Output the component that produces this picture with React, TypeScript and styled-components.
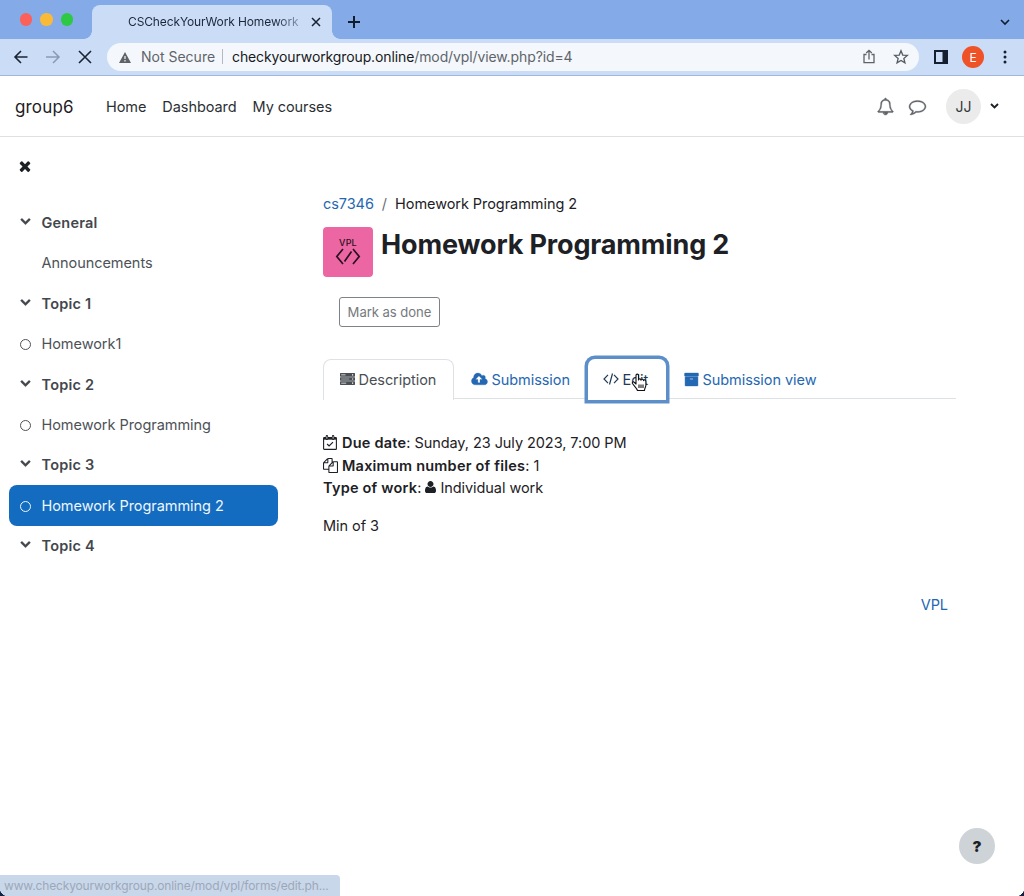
import React from "react";
import styled, { createGlobalStyle, css } from "styled-components";

const Global = createGlobalStyle`
  * { box-sizing: border-box; }
  body { margin: 0; background: #fff; font-family: Inter, "Liberation Sans", sans-serif; color: #1d2125; }
`;

/* ---------- icons ---------- */

const Svg = styled.svg<{ $dy?: number }>`
  display: block;
  flex: none;
  margin-top: ${(p) => p.$dy ?? 0}px;
`;

const glyphs = {
  chevron:
    "M1683 808l-742 741q-19 19-45 19t-45-19l-742-741q-19-19-19-45.5t19-45.5l166-165q19-19 45-19t45 19l531 531 531-531q19-19 45-19t45 19l166 165q19 19 19 45.5t-19 45.5z",
  times:
    "M1490 1322q0 40-28 68l-136 136q-28 28-68 28t-68-28l-294-294-294 294q-28 28-68 28t-68-28l-136-136q-28-28-28-68t28-68l294-294-294-294q-28-28-28-68t28-68l136-136q28-28 68-28t68 28l294 294 294-294q28-28 68-28t68 28l136 136q28 28 28 68t-28 68l-294 294 294 294q28 28 28 68z",
  archive:
    "M1088 832q0-26-19-45t-45-19h-256q-26 0-45 19t-19 45 19 45 45 19h256q26 0 45-19t19-45zm576-192v960q0 26-19 45t-45 19h-1408q-26 0-45-19t-19-45v-960q0-26 19-45t45-19h1408q26 0 45 19t19 45zm64-448v256q0 26-19 45t-45 19h-1536q-26 0-45-19t-19-45v-256q0-26 19-45t45-19h1536q26 0 45 19t19 45z",
  cloud:
    "M1216 864q0-14-9-23l-352-352q-9-9-23-9t-23 9l-351 351q-10 12-10 24 0 14 9 23t23 9h224v352q0 13 9.5 22.5t22.5 9.5h192q13 0 22.5-9.5t9.5-22.5v-352h224q13 0 22.5-9.5t9.5-22.5zm640 288q0 159-112.5 271.5t-271.5 112.5h-1088q-185 0-316.5-131.5t-131.5-316.5q0-130 70-240t188-165q-2-30-2-43 0-212 150-362t362-150q156 0 285.5 87t188.5 231q71-62 166-62 106 0 181 75t75 181q0 76-41 138 130 31 213.5 135.5t83.500 238.5z",
  user:
    "M1600 1405q0 120-73 189.5t-194 69.5h-874q-121 0-194-69.5t-73-189.5q0-53 3.5-103.5t14-109 26.5-108.5 43-97.5 62-81 85.5-53.5 111.5-20q9 0 42 21.5t74.5 48 108 48 133.5 21.5 133.5-21.5 108-48 74.5-48 42-21.5q61 0 111.5 20t85.5 53.5 62 81 43 97.5 26.5 108.5 14 109 3.5 103.5zm-320-893q0 159-112.5 271.5t-271.5 112.5-271.5-112.5-112.5-271.5 112.5-271.5 271.5-112.5 271.5 112.5 112.5 271.5z",
  files:
    "M1696 384q40 0 68 28t28 68v1216q0 40-28 68t-68 28h-960q-40 0-68-28t-28-68v-288h-544q-40 0-68-28t-28-68v-672q0-40 20-88t48-76l408-408q28-28 76-48t88-20h416q40 0 68 28t28 68v328q68-40 128-40h416zm-544 213l-299 299h299v-299zm-640-384l-299 299h299v-299zm196 647l316-316v-416h-384v416q0 40-28 68t-68 28h-416v640h512v-256q0-40 20-88t48-76zm956 804v-1152h-384v416q0 40-28 68t-68 28h-416v640h896z",
  comment:
    "M896 384q-204 0-381.5 69.5t-282 187.5-104.5 255q0 112 71.5 213.5t201.5 175.5l87 50-27 96q-24 91-70 172 152-63 275-171l43-38 57 6q69 8 130 8 204 0 381.5-69.5t282-187.5 104.5-255-104.5-255-282-187.5-381.5-69.5zm896 512q0 174-120 321.5t-326 233-450 85.5q-70 0-145-8-198 175-460 242-49 14-114 22h-5q-15 0-27-10.5t-16-27.5v-1q-3-4-.5-12t2-10 4.5-9.5l6-9 7-8.5 8-9q7-8 31-34.5t34.5-38 31-39.5 32.5-51 27-59 26-76q-157-89-247.5-220t-90.5-281q0-174 120-321.5t326-233 450-85.5 450 85.5 326 233 120 321.5z",
  bell:
    "M912 1696q0-16-16-16-59 0-101.5-42.5t-42.5-101.5q0-16-16-16t-16 16q0 73 51.5 124.5t124.5 51.5q16 0 16-16zm-666-288h1300q-266-300-266-832 0-51-24-105t-69-103-121.5-80.5-169.5-31.5-169.5 31.5-121.5 80.5-69 103-24 105q0 532-266 832zm1482 0q0 52-38 90t-90 38h-448q0 106-75 181t-181 75-181-75-75-181h-448q-52 0-90-38t-38-90q50-42 91-88t85-119.5 74.5-158.5 50-206 19.5-260q0-152 117-282.5t307-158.5q-8-19-8-39 0-40 28-68t68-28 68 28 28 68q0 20-8 39 190 28 307 158.5t117 282.5q0 139 19.5 260t50 206 74.5 158.5 85 119.5 91 88z",
};

const Glyph = ({ name, size, box = "0 0 1792 1792", width, dy, weight = 0 }: {
  name: keyof typeof glyphs; size: number; box?: string; width?: number; dy?: number; weight?: number;
}) => (
  <Svg width={width ?? size} height={size} viewBox={box} fill="currentColor" stroke="currentColor" strokeWidth={weight} overflow="visible" $dy={dy}>
    <path d={glyphs[name]} />
  </Svg>
);

const ServerIcon = () => (
  <Svg width="15" height="12" viewBox="0 0 15 13" preserveAspectRatio="none" fill="currentColor" $dy={-1}>
    <path fillRule="evenodd" d="M.5 0h14l.5.5v3l-.5.5H.5L0 3.500v-3zM1.200 1.600v.8h4.300v-.8zM12 1.400v1.200h1.200V1.400z" />
    <path fillRule="evenodd" d="M.5 4.500h14l.5.5v3l-.5.5H.5L0 8V5zM1.200 6.100v.8h8v-.8zM12 5.900v1.200h1.200V5.900z" />
    <path fillRule="evenodd" d="M.5 9h14l.5.5v3l-.5.5H.5L0 12.500v-3zM1.200 10.600v.8h5v-.8zM12 10.400v1.200h1.200v-1.200z" />
  </Svg>
);

const CalendarIcon = () => (
  <Svg width="15" height="15" viewBox="0 0 15 15" fill="none" stroke="currentColor">
    <rect x=".6" y="2.600" width="12.800" height="11.800" rx=".7" strokeWidth="1.100" />
    <path d="M.6 3.700h12.800" strokeWidth="1.900" />
    <path d="M3.900 1.200v2.600M10.100 1.200v2.600" strokeWidth="2.400" strokeLinecap="round" />
    <path d="M3.900 1.300v2.400M10.100 1.300v2.400" stroke="#fff" strokeWidth=".8" />
    <path d="M4.100 9l2 2 3.900-3.900" strokeWidth="1.200" />
  </Svg>
);

const CodeIcon = () => (
  <Svg width="16" height="12" viewBox="0 0 16 12" fill="none" stroke="currentColor" strokeWidth="1.200">
    <path d="M5 1.800L1 6l4 4.200M11 1.800L15 6l-4 4.200M9.500.5l-3 11" />
  </Svg>
);

/* ---------- browser chrome ---------- */

const Window = styled.div`
  position: relative;
  width: 1024px;
  height: 896px;
  display: flex;
  flex-direction: column;
  overflow: hidden;
`;

const TabStrip = styled.div`
  height: 39px;
  flex: none;
  display: flex;
  align-items: flex-end;
  background: #84abe7;
  padding-right: 13px;
`;

const Lights = styled.div`
  display: flex;
  gap: 8px;
  width: 92px;
  padding: 0 0 13.500px 19.500px;
`;

const Light = styled.i<{ $c: string }>`
  width: 12.500px;
  height: 12.500px;
  border-radius: 50%;
  background: ${(p) => p.$c};
`;

const BrowserTab = styled.div`
  position: relative;
  width: 240px;
  height: 34px;
  border-radius: 8px 8px 0 0;
  background: #cbdcf6;
  display: flex;
  align-items: center;
  padding: 0 10px 1px 36px;
  font-size: 12px;
  &::before, &::after {
    content: "";
    position: absolute;
    bottom: 0;
    width: 8px;
    height: 8px;
  }
  &::before { left: -8px; background: radial-gradient(circle at 0 0, transparent 7.500px, #cbdcf6 8px); }
  &::after { right: -8px; background: radial-gradient(circle at 100% 0, transparent 7.500px, #cbdcf6 8px); }
`;

const TabTitle = styled.span`
  width: 171px;
  white-space: nowrap;
  letter-spacing: -0.12px;
  background: linear-gradient(90deg, #1b2638 86%, #8a9bb8 100%);
  background-clip: text;
  color: transparent;
  margin-right: 11px;
`;

const NewTab = styled.div`
  flex: 1;
  display: flex;
  justify-content: space-between;
  padding: 0 1px 11px 16px;
  align-items: center;
`;

const Toolbar = styled.div`
  height: 37px;
  flex: none;
  display: flex;
  align-items: center;
  background: #cbdcf6;
  border-bottom: 1px solid #9fb6dd;
  padding: 0 15px 0 13px;
`;

const NavIcons = styled.div`
  display: flex;
  gap: 16px;
  width: 94px;
`;

const Address = styled.div`
  width: 812px;
  height: 28px;
  margin-right: 15px;
  border-radius: 14px;
  background: #f4f8fd;
  display: flex;
  align-items: center;
  padding: 0 10px 1px 12px;
  font-size: 14px;
  color: #606468;
`;

const Security = styled.span`
  width: 74px;
  margin-left: 10px;
  white-space: nowrap;
`;

const Divider = styled.i`
  width: 1px;
  height: 15px;
  margin: 0 9px 0 7px;
  background: #b5bac2;
`;

const Url = styled.span`
  flex: 1;
  letter-spacing: -0.11px;
  b { font-weight: 400; color: #17191c; }
`;

const AddressActions = styled.span`
  display: flex;
  gap: 16px;
`;

const Profile = styled.span`
  width: 22px;
  height: 22px;
  margin: 0 19px 0 14px;
  border-radius: 50%;
  background: #ee5226;
  color: #fff;
  font-size: 12px;
  display: grid;
  place-items: center;
`;

/* ---------- site header ---------- */

const SiteHeader = styled.header`
  height: 61px;
  flex: none;
  display: flex;
  align-items: center;
  border-bottom: 1px solid #dee0e2;
  padding: 0 25px 0 15px;
`;

const Brand = styled.span`
  width: 91px;
  font-size: 17px;
  letter-spacing: 0.15px;
  padding-top: 1px;
`;

const SiteNav = styled.nav`
  flex: 1;
  display: flex;
  gap: 16px;
  font-size: 14.500px;
  letter-spacing: -0.07px;
  color: #2b2f33;
`;

const UserTools = styled.div`
  display: flex;
  align-items: center;
  gap: 15px;
  color: #5f6368;
`;

const Initials = styled.span`
  width: 35px;
  height: 35px;
  margin: 0 -6px 0 5px;
  border-radius: 50%;
  background: #ebebec;
  color: #33383d;
  font-size: 14px;
  display: grid;
  place-items: center;
`;

const Dark = styled.span`
  color: #1d2125;
`;

/* ---------- page ---------- */

const Body = styled.div`
  flex: 1;
  display: flex;
`;

const Sidebar = styled.aside`
  width: 286px;
  padding: 21px 9px 0;
`;

const CloseButton = styled.div`
  padding-left: 8px;
  height: 44.400px;
`;

const IndexRow = styled.div<{ $section?: boolean; $active?: boolean }>`
  height: 40.400px;
  width: 268.500px;
  display: flex;
  align-items: center;
  padding-left: 10.500px;
  font-size: 14.500px;
  letter-spacing: -0.05px;
  border-radius: 8px;
  color: #4d5257;
  ${(p) => p.$section && css`font-weight: 600; color: #43474c; letter-spacing: 0.2px;`}
  ${(p) => p.$active && css`background: #136cc0; color: #eef6fd;`}
`;

const Marker = styled.span`
  width: 22px;
`;

const Ring = styled.i`
  display: block;
  width: 11px;
  height: 11px;
  margin-top: 2px;
  border: 1px solid currentColor;
  border-radius: 50%;
`;

const Main = styled.main`
  width: 633px;
  margin-left: 37px;
  padding-top: 55.500px;
  font-size: 14.500px;
  letter-spacing: -0.06px;
  display: flex;
  flex-direction: column;
`;

const Link = styled.a`
  color: #2467b2;
`;

const Breadcrumb = styled.div`
  display: flex;
  gap: 8px;
  height: 22px;
  line-height: 22px;
  i { font-style: normal; color: #6a7076; }
`;

const TitleRow = styled.div`
  display: flex;
  gap: 8px;
  margin-top: 12px;
`;

const ActivityIcon = styled.div`
  width: 50px;
  height: 50px;
  border-radius: 4px;
  background: #eb66a2;
  color: #2a1020;
  display: flex;
  flex-direction: column;
  align-items: center;
  padding-top: 11px;
  font-size: 9px;
  font-weight: 500;
  letter-spacing: 0.2px;
  line-height: 10px;
`;

const Title = styled.h1`
  margin: 0;
  font-size: 27px;
  line-height: 35px;
  font-weight: 700;
  letter-spacing: -0.14px;
  white-space: nowrap;
`;

const DoneButton = styled.button`
  width: 101px;
  height: 30px;
  margin: 20px 0 0 16px;
  padding: 1px 0 0;
  border: 1px solid #7d8287;
  border-radius: 3px;
  background: #fff;
  color: #75797e;
  font: 13.100px Inter, sans-serif;
  letter-spacing: -0.05px;
`;

const Tabs = styled.div`
  display: flex;
  height: 40.500px;
  margin-top: 32px;
  border-bottom: 1px solid #dfe2e5;
`;

const Tab = styled.div<{ $w: number; $active?: boolean; $focus?: boolean }>`
  position: relative;
  width: ${(p) => p.$w}px;
  height: 41px;
  padding: 0 0 0 18px;
  display: flex;
  align-items: center;
  gap: 3.500px;
  white-space: nowrap;
  color: #2467b2;
  ${(p) => p.$active && css`
    color: #4a4f55;
    background: #fff;
    border: 1px solid #dee2e6;
    border-bottom: 0;
    border-radius: 8px 8px 0 0;
    padding: 0 0 1px 16px;
  `}
  ${(p) => p.$focus && css`
    color: #1f3a59;
    background: #fff;
    border-radius: 7px 7px 0 0;
    padding-left: 15.500px;
    box-shadow: 0 0 0 3.500px #5c8fc9;
  `}
`;

const Cursor = styled.span`
  position: absolute;
  left: 43px;
  top: 14px;
`;

const Details = styled.div`
  margin-top: 32.500px;
  b { font-weight: 600; letter-spacing: 0.22px; }
`;

const Line = styled.div`
  display: flex;
  align-items: center;
  gap: 4px;
  height: 22.400px;
  white-space: nowrap;
`;

const Note = styled.p`
  margin: 16px 0 0;
  line-height: 22px;
`;

const FooterLink = styled(Link)`
  align-self: flex-end;
  margin: 57px 8px 0 0;
  line-height: 22px;
`;

const Help = styled.div`
  position: absolute;
  right: 29px;
  bottom: 32px;
  width: 36px;
  height: 36px;
  border-radius: 50%;
  background: #ced3d8;
  font-size: 15px;
  font-weight: 900;
  display: grid;
  place-items: center;
`;

const StatusBar = styled.div`
  position: absolute;
  left: 0;
  bottom: 0;
  width: 340px;
  height: 21px;
  padding-left: 4px;
  border-radius: 0 4px 0 0;
  background: #c9d7eb;
  color: #9da8b7;
  font-size: 12px;
  line-height: 21px;
  letter-spacing: -0.14px;
  white-space: nowrap;
`;

const Corner = styled.i<{ $side: "left" | "right" }>`
  position: absolute;
  bottom: 0;
  ${(p) => p.$side}: 0;
  width: 8px;
  height: 8px;
  background: radial-gradient(circle at ${(p) => (p.$side === "left" ? "100%" : "0")} 0, transparent 8px, #152342 8.500px);
`;

const index = [
  { label: "General", section: true },
  { label: "Announcements", plain: true },
  { label: "Topic 1", section: true },
  { label: "Homework1" },
  { label: "Topic 2", section: true },
  { label: "Homework Programming" },
  { label: "Topic 3", section: true },
  { label: "Homework Programming 2", active: true },
  { label: "Topic 4", section: true },
];

export default function App() {
  return (
    <Window>
      <Global />
      <TabStrip>
        <Lights><Light $c="#fb605b" /><Light $c="#f9ba37" /><Light $c="#2dc944" /></Lights>
        <BrowserTab>
          <TabTitle>CSCheckYourWork Homework</TabTitle>
          <Svg width="12" height="12" viewBox="0 0 12 12" stroke="#17212f" strokeWidth="1.500"><path d="M2 2l8 8M10 2l-8 8" /></Svg>
        </BrowserTab>
        <NewTab>
          <Svg width="12" height="12" viewBox="0 0 12 12" stroke="#101c30" strokeWidth="2"><path d="M6 0v12M0 6h12" /></Svg>
          <Svg width="10" height="7" viewBox="0 0 10 7" fill="none" stroke="#101c30" strokeWidth="1.600"><path d="M1 1l4 4 4-4" /></Svg>
        </NewTab>
      </TabStrip>
      <Toolbar>
        <NavIcons>
          <Svg width="16" height="14" viewBox="0 0 16 14" fill="none" stroke="#1b2430" strokeWidth="1.600"><path d="M14.500 7H2M8 1L2 7l6 6" /></Svg>
          <Svg width="16" height="14" viewBox="0 0 16 14" fill="none" stroke="#8b9ab3" strokeWidth="1.500"><path d="M1 7h13M8 1l6 6-6 6" /></Svg>
          <Svg width="16" height="14" viewBox="0 0 16 14" fill="none" stroke="#1b2430" strokeWidth="1.600"><path d="M2 1l12 12M14 1L2 13" /></Svg>
        </NavIcons>
        <Address>
          <Svg width="12" height="11" viewBox="0 0 12 11" $dy={2}><path d="M6 0l6 11H0z" fill="#5f6368" /><path d="M6 4v3M6 8v1.400" stroke="#f4f8fd" strokeWidth="1.200" /></Svg>
          <Security>Not Secure</Security>
          <Divider />
          <Url><b>checkyourworkgroup.online</b>/mod/vpl/view.php?id=4</Url>
          <AddressActions>
            <Svg width="16" height="16" viewBox="0 0 16 16" fill="none" stroke="#5f6368" strokeWidth="1.300" $dy={1}><path d="M5.500 5.500H3v8.200h10V5.500h-2.500M8 10.500V1.500M5.200 4L8 1.300 10.800 4" /></Svg>
            <Svg width="16" height="16" viewBox="0 0 16 16" fill="none" stroke="#565b61" strokeWidth="1.300" $dy={1}><path d="M8 1.800l1.750 4.250 4.600.35-3.500 3 1.100 4.500L8 11.500l-3.950 2.400 1.100-4.500-3.500-3 4.600-.35z" /></Svg>
          </AddressActions>
        </Address>
        <Svg width="14" height="14" viewBox="0 0 14 14"><path d="M0 0h14v14H0zM2 2v10h6.500V2z" fill="#14202f" fillRule="evenodd" /></Svg>
        <Profile>E</Profile>
        <Svg width="4" height="14" viewBox="0 0 4 14" fill="#14202f"><circle cx="2" cy="2" r="1.500" /><circle cx="2" cy="7" r="1.500" /><circle cx="2" cy="12" r="1.500" /></Svg>
      </Toolbar>

      <SiteHeader>
        <Brand>group6</Brand>
        <SiteNav><span>Home</span><span>Dashboard</span><span>My courses</span></SiteNav>
        <UserTools>
          <Glyph name="bell" size={17} weight={40} />
          <Glyph name="comment" size={17} weight={40} />
          <Initials>JJ</Initials>
          <Dark><Svg width="9" height="6" viewBox="0 0 9 6" fill="none" stroke="currentColor" strokeWidth="1.900"><path d="M1 1l3.500 3.500L8 1" /></Svg></Dark>
        </UserTools>
      </SiteHeader>

      <Body>
        <Sidebar>
          <CloseButton><Glyph name="times" size={16} /></CloseButton>
          {index.map((r) => (
            <IndexRow key={r.label} $section={r.section} $active={r.active}>
              <Marker>{r.section ? <Glyph name="chevron" size={11} dy={-4} weight={40} /> : r.plain ? null : <Ring />}</Marker>
              {r.label}
            </IndexRow>
          ))}
        </Sidebar>
        <Main>
          <Breadcrumb><Link>cs7346</Link><i>/</i><span>Homework Programming 2</span></Breadcrumb>
          <TitleRow>
            <ActivityIcon>
              VPL
              <Svg width="26" height="17" viewBox="0 0 26 17" fill="none" stroke="currentColor" strokeWidth="1.700"><path d="M8 1L1.800 8.500 8 16M18 1l6.200 7.500L18 16M16.500 3.500l-7 10" /></Svg>
            </ActivityIcon>
            <Title>Homework Programming 2</Title>
          </TitleRow>
          <DoneButton>Mark as done</DoneButton>
          <Tabs>
            <Tab $w={131} $active><ServerIcon />Description</Tab>
            <Tab $w={133.5}><Glyph name="cloud" size={15} width={16} box="0 0 1920 1792" weight={40} />Submission</Tab>
            <Tab $w={78.5} $focus>
              <CodeIcon />Edit
              <Cursor>
                <Svg width="17" height="20" viewBox="0 0 17 20" fill="#fff" stroke="#111" strokeWidth="1.100" strokeLinejoin="round">
                  <path d="M5 11V2.500C5 .6 7.500.6 7.500 2.500V7c0-1.500 2.500-1.500 2.500.2 0-1.500 2.500-1.200 2.500.4 0-1.200 2.400-1 2.400.8V12c0 2-1.400 3-1.400 5.500H6.500C6 15.500 3 13 1.500 10.500.8 9 2.500 8.300 3.500 9.500z" />
                  <path d="M8 11.500v3.500M10 11.500v3.500M12 11.500v3.500" />
                </Svg>
              </Cursor>
            </Tab>
            <Tab $w={160}><Glyph name="archive" size={15} weight={50} />Submission view</Tab>
          </Tabs>
          <Details>
            <Line><CalendarIcon /><span><b>Due date</b>: Sunday, 23 July 2023, 7:00 PM</span></Line>
            <Line><Glyph name="files" size={15} /><span><b>Maximum number of files</b>: 1</span></Line>
            <Line><span><b>Type of work</b>:</span><Glyph name="user" size={14} width={11} box="192 0 1408 1792" /><span>Individual work</span></Line>
          </Details>
          <Note>Min of 3</Note>
          <FooterLink>VPL</FooterLink>
        </Main>
      </Body>
      <Help>?</Help>
      <StatusBar>www.checkyourworkgroup.online/mod/vpl/forms/edit.ph...</StatusBar>
      <Corner $side="left" />
      <Corner $side="right" />
    </Window>
  );
}
